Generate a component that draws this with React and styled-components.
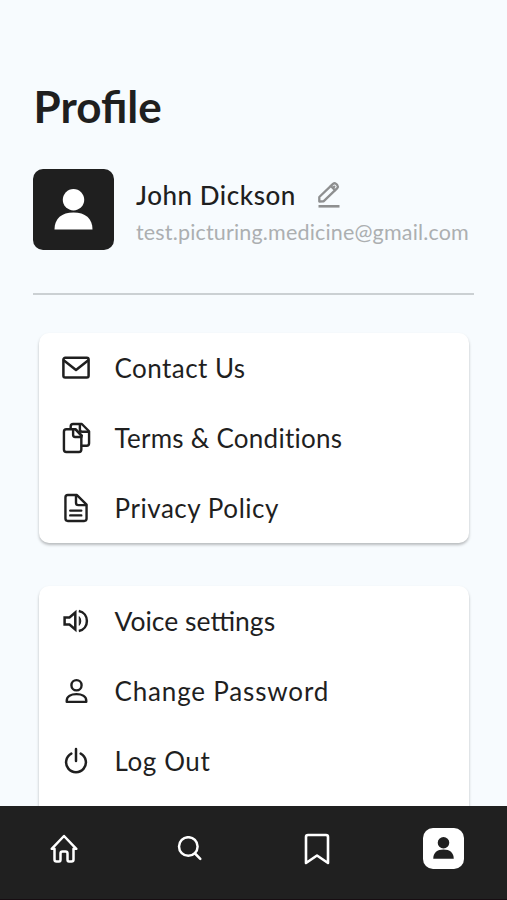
import React from "react";
import styled, { createGlobalStyle } from "styled-components";

const ink = "#1f1f1f";

const GlobalStyle = createGlobalStyle`
  * { box-sizing: border-box; }
  body { margin: 0; background: #f7fbfe; color: ${ink}; font-family: Lato, sans-serif; }
`;

const Screen = styled.div`
  height: 900px;
  display: flex;
  flex-direction: column;
  overflow: hidden;
  background: #f7fbfe;
`;

const Content = styled.main`
  flex: 1;
  min-height: 0;
  overflow: hidden;
  padding: 82px 33px 0;
`;

const Title = styled.h1`
  margin: 0 0 0 0.5px;
  font-size: 44px;
  line-height: 49px;
  font-weight: 700;
`;

const ProfileRow = styled.section`
  display: flex;
  align-items: flex-start;
  margin-top: 38px;
  height: 81px;
`;

const Avatar = styled.div`
  display: flex;
  align-items: center;
  justify-content: center;
  flex: none;
  width: ${(p) => p.$size}px;
  height: ${(p) => p.$size}px;
  border-radius: ${(p) => p.$radius}px;
  background: ${(p) => (p.$light ? "#fff" : ink)};
  color: ${(p) => (p.$light ? ink : "#fff")};
`;

const Details = styled.div`
  margin-left: 22px;
  padding-top: 10px;
  white-space: nowrap;
`;

const NameLine = styled.div`
  display: flex;
  align-items: center;
  gap: 20px;
  height: 32px;
  color: #8e8f90;
`;

const Name = styled.h2`
  margin: 0;
  font-size: 26px;
  line-height: 32px;
  font-weight: 500;
  letter-spacing: 0.55px;
  color: ${ink};
`;

const Email = styled.div`
  margin-top: 7px;
  font-size: 21.5px;
  line-height: 28px;
  font-weight: 400;
  letter-spacing: 0.17px;
  color: #acafb1;
`;

const Divider = styled.hr`
  width: 441px;
  height: 2px;
  margin: 43px 0 0;
  border: 0;
  background: #cbd0d3;
`;

const Card = styled.section`
  margin: ${(p) => p.$top}px 5px 0 6px;
  border-radius: 10px;
  background: #fff;
  box-shadow: 0 2px 3px rgba(0, 0, 0, 0.26);
`;

const MenuItem = styled.div`
  display: flex;
  align-items: center;
  height: 70px;
  padding-left: 21.5px;
`;

const IconSlot = styled.span`
  display: flex;
  justify-content: center;
  width: 31px;
  margin-right: 23px;
`;

const Label = styled.span`
  font-size: ${(p) => p.$size || 26}px;
  line-height: 32px;
  letter-spacing: ${(p) => (p.$spacing ? `${p.$spacing}px` : "normal")};
  white-space: nowrap;
`;

const NavBar = styled.nav`
  display: grid;
  grid-template-columns: repeat(4, 126.5px);
  justify-content: center;
  flex: none;
  height: 94px;
  padding-top: 22px;
  background: #202020;
  border-bottom: 1px solid #170d12;
  color: #fff;
`;

const NavItem = styled.div`
  display: flex;
  align-items: center;
  justify-content: center;
  height: 41px;
`;

const Glyph = styled.svg`
  display: block;
  flex: none;
  fill: none;
  stroke: currentColor;
  stroke-width: ${(p) => p.$stroke || 2.5};
  stroke-linecap: round;
  stroke-linejoin: round;
`;

const PersonSolid = styled.svg`
  display: block;
  fill: currentColor;
`;

const Person = ({ size }) => (
  <PersonSolid width={size} height={size * 1.05} viewBox="0 0 40 42">
    <circle cx="20" cy="11" r="11" />
    <path d="M0.5 41.5C0.5 30 8 24 20 24s19.500 6 19.500 17.500z" />
  </PersonSolid>
);

const PencilIcon = () => (
  <Glyph width="26" height="28" viewBox="0 0 26 28" $stroke={2.3}>
    <path d="M3.300 20.500V16L17 2.800q1.500-1.200 3 0l1.300 1.300q1.200 1.500 0 3L7.500 20.400z" />
    <path d="M14.800 5l4.200 4.200M18.300 5.600l-1.400 1.400" />
    <path d="M2.500 25.300h21" strokeWidth="2.600" strokeLinecap="butt" />
  </Glyph>
);

const MailIcon = () => (
  <Glyph width="28" height="24" viewBox="0 0 28 24">
    <rect x="1.400" y="1.800" width="25.200" height="19.800" rx="1.800" />
    <path d="M2 4.500l12 9.500 12-9.500" />
  </Glyph>
);

const CopyIcon = () => (
  <Glyph width="29" height="32" viewBox="0 0 30 32">
    <path d="M2 9.500q0-2.500 2.500-2.500h9.500l6 6.500v14.500q0 2.500-2.500 2.500H4.500q-2.500 0-2.500-2.500z" />
    <path d="M11.500 7.500v5.500q0 2 2 2H20" />
    <path d="M9 6.500V4q0-2.500 2.500-2.500H20.500l7.500 7.500v12.500q0 2.500-2.500 2.500H20.500" />
    <path d="M18.500 2v5q0 2.500 2.500 2.500h6M14 7l6.500 6.500" />
  </Glyph>
);

const FileIcon = () => (
  <Glyph width="24" height="30" viewBox="0 0 25 30">
    <path d="M1.500 4q0-2.500 2.500-2.500H13.500l10 10V26q0 2.500-2.500 2.500H4q-2.500 0-2.500-2.500z" />
    <path d="M12.500 2v7.500q0 2.500 2.500 2.500h8M6.500 17.700h11.500M6.500 22.700h11.500" />
  </Glyph>
);

const VoiceIcon = () => (
  <Glyph width="26" height="24" viewBox="0 0 26 24">
    <path d="M1.600 8.500H6.500L12.300 3.500v17L6.500 15.500H1.600z" strokeLinejoin="miter" />
    <path d="M16.500 8q2.800 4 0 8z" fill="currentColor" strokeWidth="1" />
    <path d="M15.800 2c10.800 2 10.800 18 0 20" strokeLinecap="butt" />
  </Glyph>
);

const UserIcon = () => (
  <Glyph width="23" height="26" viewBox="0 0 24 26">
    <circle cx="12" cy="7" r="5.300" />
    <path d="M1.800 24.300v-1C1.800 18.500 6.500 16.300 12 16.300s10.200 2.200 10.200 7v1z" />
  </Glyph>
);

const PowerIcon = () => (
  <Glyph width="24" height="28" viewBox="0 0 24 28">
    <path d="M12 2V14" />
    <path d="M7.300 6.600A9.900 9.900 0 1 0 16.700 6.600" />
  </Glyph>
);

const HomeIcon = () => (
  <Glyph width="28" height="30" viewBox="0 0 28 30">
    <path d="M1.700 14.800L14 2 26.300 14.800H23.500V25.500q0 2-2 2H19q-1.500 0-1.500-2v-6q0-2-2-2h-3q-2 0-2 2v6q0 2-1.500 2H6.500q-2 0-2-2V14.800z" />
  </Glyph>
);

const SearchIcon = () => (
  <Glyph width="26" height="26" viewBox="0 0 26 26">
    <circle cx="11.300" cy="10.500" r="9.300" />
    <path d="M18 17.500l5.300 5.300" />
  </Glyph>
);

const BookmarkIcon = () => (
  <Glyph width="26" height="32" viewBox="0 0 26 32" $stroke={2.6}>
    <path d="M2 4q0-2 2-2h18q2 0 2 2v26L13 22.500 2 30z" />
  </Glyph>
);

const groups = [
  {
    top: 38,
    items: [
      { label: "Contact Us", spacing: 0.45, Icon: MailIcon },
      { label: "Terms & Conditions", spacing: 0.26, Icon: CopyIcon },
      { label: "Privacy Policy", spacing: 0.55, Icon: FileIcon },
    ],
  },
  {
    top: 43,
    items: [
      { label: "Voice settings", size: 26.5, Icon: VoiceIcon },
      { label: "Change Password", spacing: 0.83, Icon: UserIcon },
      { label: "Log Out", spacing: 0.6, Icon: PowerIcon },
    ],
  },
];

export default function App() {
  return (
    <Screen>
      <GlobalStyle />
      <Content>
        <Title>Profile</Title>
        <ProfileRow>
          <Avatar $size={81} $radius={10}>
            <Person size={39} />
          </Avatar>
          <Details>
            <NameLine>
              <Name>John Dickson</Name>
              <PencilIcon />
            </NameLine>
            <Email>test.picturing.medicine@gmail.com</Email>
          </Details>
        </ProfileRow>
        <Divider />
        {groups.map(({ top, items }) => (
          <Card key={top} $top={top}>
            {items.map(({ label, spacing, size, Icon }) => (
              <MenuItem key={label}>
                <IconSlot>
                  <Icon />
                </IconSlot>
                <Label $spacing={spacing} $size={size}>
                  {label}
                </Label>
              </MenuItem>
            ))}
            {top === 43 && <MenuItem />}
          </Card>
        ))}
      </Content>
      <NavBar>
        <NavItem>
          <HomeIcon />
        </NavItem>
        <NavItem>
          <SearchIcon />
        </NavItem>
        <NavItem>
          <BookmarkIcon />
        </NavItem>
        <NavItem>
          <Avatar $size={41} $radius={10} $light>
            <Person size={21} />
          </Avatar>
        </NavItem>
      </NavBar>
    </Screen>
  );
}
